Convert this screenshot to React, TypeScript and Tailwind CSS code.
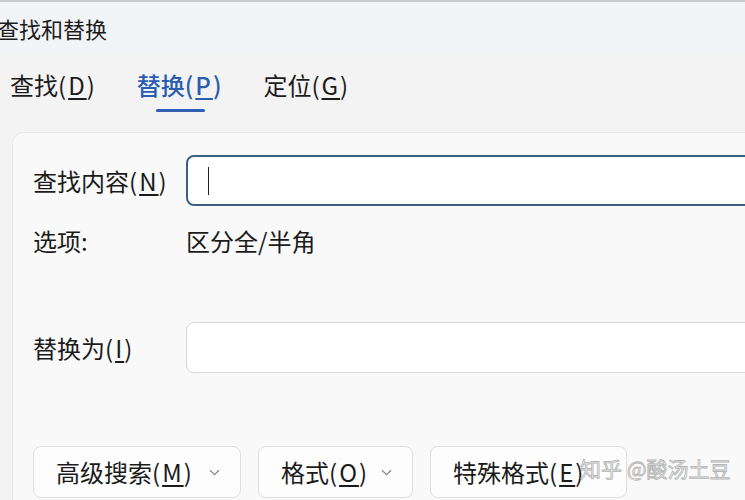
import React from "react";

const font = {
  fontFamily: '"Noto Sans CJK SC", "Noto Sans", sans-serif',
};

// label like 查找(D) with the access key underlined
const Key = ({ text, k }: { text: string; k: string }) => (
  <>
    {text}
    <span className="tracking-[2px]">
      (<span className="underline underline-offset-[3px]">{k}</span>)
    </span>
  </>
);

const Chevron = () => (
  <svg width="11" height="7" viewBox="0 0 11 7" className="text-[#8a8a8a]">
    <path d="M1 1.2 5.5 5.6 10 1.2" fill="none" stroke="currentColor" strokeWidth="1.3" />
  </svg>
);

const DropButton = ({
  text,
  k,
  width,
  chevron = true,
}: {
  text: string;
  k: string;
  width: string;
  chevron?: boolean;
}) => (
  <div
    className={`${width} h-[52px] shrink-0 flex items-center pl-[22px] pr-[20px] justify-between rounded-[8px] border border-[#dedede] bg-[#fdfdfd] text-[24px] text-[#1b1b1b]`}
  >
    <span className="leading-none">
      <Key text={text} k={k} />
    </span>
    {chevron && <Chevron />}
  </div>
);

export default function App() {
  return (
    <div
      className="relative w-[745px] h-[500px] overflow-hidden bg-[#f3f3f3] border-t-2 border-[#c9cbcf]"
      style={font}
    >
      {/* title bar */}
      <div className="h-[52px] bg-[#f1f3f7] flex items-center">
        <span className="-ml-[3px] text-[22px] text-[#1b1b1b] leading-none">查找和替换</span>
      </div>

      {/* tabs */}
      <div className="flex pl-[10px] gap-[40px] h-[60px] items-start pt-[19px] text-[24px] leading-none text-[#1b1b1b]">
        <span>
          <Key text="查找" k="D" />
        </span>
        <span className="relative text-[#2a5db0] font-medium">
          <Key text="替换" k="P" />
          <span className="absolute left-[19px] top-[36px] w-[49px] h-[3px] rounded-full bg-[#2e5fb4]" />
        </span>
        <span>
          <Key text="定位" k="G" />
        </span>
      </div>

      {/* panel */}
      <div className="ml-[12px] mt-[18px] w-[800px] h-[420px] rounded-tl-[12px] border border-[#e6e6e6] bg-[#f9f9f9] pl-[20px] pt-[22px] text-[24px] text-[#1b1b1b]">
        <div className="flex items-center h-[51px]">
          <span className="w-[153px] shrink-0 leading-none">
            <Key text="查找内容" k="N" />
          </span>
          <div className="flex-1 h-[51px] rounded-[8px] border-2 border-[#3b6087] bg-white flex items-center pl-[20px]">
            <span className="w-px h-[28px] bg-[#222]" />
          </div>
        </div>

        <div className="flex items-center h-[30px] mt-[20px] leading-none">
          <span className="w-[153px] shrink-0">选项:</span>
          <span>区分全/半角</span>
        </div>

        <div className="flex items-center h-[51px] mt-[66px]">
          <span className="w-[153px] shrink-0 leading-none">
            <Key text="替换为" k="I" />
          </span>
          <div className="flex-1 h-[51px] rounded-[8px] border border-[#d6d6d6] bg-white" />
        </div>

        <div className="flex gap-[17px] mt-[73px]">
          <DropButton text="高级搜索" k="M" width="w-[208px]" />
          <DropButton text="格式" k="O" width="w-[155px]" />
          <DropButton text="特殊格式" k="E" width="w-[197px]" chevron={false} />
        </div>
      </div>

      {/* watermark */}
      <div className="absolute left-[580px] top-[456px] whitespace-nowrap text-[21px] leading-none text-[#eeeeee]/70 [-webkit-text-stroke:0.8px_#b4b4b4]">
        知乎 @酸汤土豆
      </div>
    </div>
  );
}
